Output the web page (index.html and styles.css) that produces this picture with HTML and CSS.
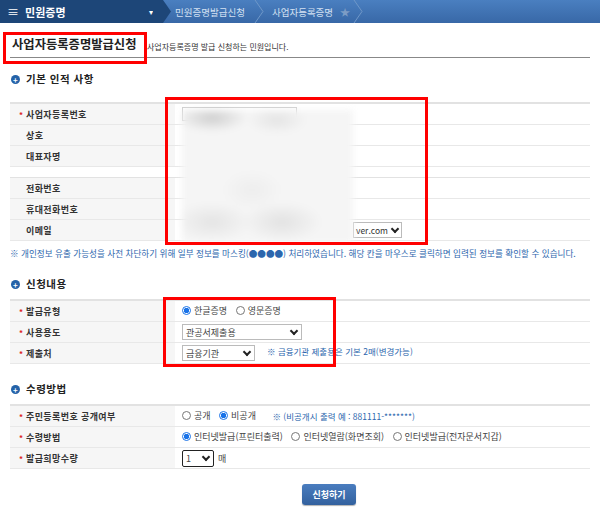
FILE: index.html
```html
<!DOCTYPE html>
<html lang="ko">
<head>
    <meta charset="UTF-8">
    <title>사업자등록증명발급신청</title>
    <link rel="stylesheet" href="styles.css">
</head>
<body>

    <div class="topbar">
        <div class="menu">
            <span class="burger">&#8801;</span>
            <span class="menu-title">민원증명</span>
            <span class="caret">&#9662;</span>
        </div>
        <svg class="tip" width="22" height="23" viewBox="0 0 22 23"><polygon points="0,0 10,0 18,11.5 10,23 0,23" fill="#1d4678"/></svg>
        <div class="crumb crumb-1">민원증명발급신청</div>
        <svg class="sep" width="10" height="23" viewBox="0 0 10 23"><polyline points="1,0 9,11.5 1,23" fill="none" stroke="#6f97c8" stroke-width="1"/></svg>
        <div class="crumb crumb-2">사업자등록증명<span class="star">&#9733;</span></div>
        <svg class="sep" width="10" height="23" viewBox="0 0 10 23"><polyline points="1,0 9,11.5 1,23" fill="none" stroke="#6f97c8" stroke-width="1"/></svg>
    </div>

    <div class="page">
        <div class="title-row">
            <h1>사업자등록증명발급신청</h1>
            <span class="desc">사업자등록증명 발급 신청하는 민원입니다.</span>
        </div>

        <h2 class="sec first"><span class="dot">+</span>기본 인적 사항</h2>
        <div class="box-wrap">
            <table class="form">
                <tr><th><span class="req">*</span>사업자등록번호</th><td><input class="txt" type="text"></td></tr>
                <tr><th>상호</th><td></td></tr>
                <tr><th>대표자명</th><td></td></tr>
                <tr class="gap"><th></th><td></td></tr>
                <tr><th>전화번호</th><td></td></tr>
                <tr><th>휴대전화번호</th><td></td></tr>
                <tr><th>이메일</th><td><span class="mail">ver.com<span class="chev"></span></span></td></tr>
            </table>
            <div class="blur"></div>
            <div class="mark mark-1"></div>
        </div>
        <p class="note">※ 개인정보 유출 가능성을 사전 차단하기 위해 일부 정보를 마스킹(●●●●) 처리하였습니다. 해당 칸을 마우스로 클릭하면 입력된 정보를 확인할 수 있습니다.</p>

        <h2 class="sec"><span class="dot">+</span>신청내용</h2>
        <div class="box-wrap">
            <table class="form">
                <tr><th><span class="req">*</span>발급유형</th><td>
                    <label class="opt"><span class="radio on"></span>한글증명</label>
                    <label class="opt"><span class="radio"></span>영문증명</label>
                </td></tr>
                <tr><th><span class="req">*</span>사용용도</th><td><span class="sel sel-use">관공서제출용<span class="chev"></span></span></td></tr>
                <tr><th><span class="req">*</span>제출처</th><td><span class="sel sel-to">금융기관<span class="chev"></span></span><span class="hint">※ 금융기관 제출용은 기본 2매(변경가능)</span></td></tr>
            </table>
            <div class="mark mark-2"></div>
        </div>

        <h2 class="sec"><span class="dot">+</span>수령방법</h2>
        <table class="form">
            <tr><th><span class="req">*</span>주민등록번호 공개여부</th><td>
                <label class="opt"><span class="radio"></span>공개</label>
                <label class="opt"><span class="radio on"></span>비공개</label>
                <span class="hint near">※ (비공개시 출력 예 : 881111-*******)</span>
            </td></tr>
            <tr><th><span class="req">*</span>수령방법</th><td>
                <label class="opt"><span class="radio on"></span>인터넷발급(프린터출력)</label>
                <label class="opt"><span class="radio"></span>인터넷열람(화면조회)</label>
                <label class="opt"><span class="radio"></span>인터넷발급(전자문서지갑)</label>
            </td></tr>
            <tr><th><span class="req">*</span>발급희망수량</th><td><span class="sel sel-num">1<span class="chev"></span></span><span class="unit">매</span></td></tr>
        </table>

        <div class="actions">
            <button class="submit">신청하기</button>
        </div>
    </div>

    <div class="mark mark-title"></div>

</body>
</html>
```

FILE: styles.css
```css
body {
    margin: 0;
    font-family: "Noto Sans CJK KR", "Noto Sans", sans-serif;
    font-size: 9px;
    color: #333;
    background: #fff;
    position: relative;
    width: 600px;
    height: 521px;
    overflow: hidden;
}
.topbar {
    display: flex;
    align-items: center;
    height: 23px;
    background: linear-gradient(to bottom, #4a7fc0, #3868a7);
    color: #d4e1f2;
}
.menu {
    display: flex;
    align-items: center;
    width: 153px;
    height: 23px;
    background: #1d4678;
    color: #fff;
    box-sizing: border-box;
    padding-left: 7px;
}
.burger {
    font-size: 12px;
    margin-right: 6px;
}
.menu-title {
    font-size: 11px;
    font-weight: bold;
    flex-grow: 1;
}
.caret {
    font-size: 8px;
}
.tip {
    display: block;
}
.crumb {
    font-size: 9.5px;
}
.crumb-1 {
    padding-right: 9px;
}
.crumb-2 {
    padding: 0 3px 0 8px;
}
.star {
    color: #7c9cc5;
    font-size: 10px;
    margin-left: 7px;
}
.sep {
    display: block;
}
.page {
    padding: 0 10px;
}
.title-row {
    display: flex;
    align-items: flex-end;
    height: 35px;
    border-bottom: 1px solid #888;
    box-sizing: border-box;
    padding-bottom: 5px;
}
h1 {
    margin: 0 0 0 2px;
    font-size: 12.3px;
    font-weight: bold;
    color: #222;
    line-height: 16px;
    width: 135px;
}
.desc {
    font-size: 8px;
    color: #333;
    line-height: 11px;
}
.sec {
    display: flex;
    align-items: center;
    margin: 18px 0 8px 1px;
    font-size: 10.5px;
    font-weight: bold;
    color: #222;
    line-height: 14px;
    letter-spacing: 0.5px;
}
.sec.first {
    margin-top: 14px;
    margin-bottom: 16px;
}
.dot {
    display: inline-block;
    width: 9px;
    height: 9px;
    line-height: 9px;
    border-radius: 50%;
    background: #2462a8;
    color: #fff;
    font-size: 8px;
    text-align: center;
    margin-right: 6px;
}
.box-wrap {
    position: relative;
}
.form {
    width: 100%;
    border-collapse: collapse;
    border-top: 2px solid #e2e2e2;
}
.form th, .form td {
    height: 20px;
    border-bottom: 1px solid #e8e8e8;
    padding: 0;
    font-size: 9px;
}
.form th {
    width: 165px;
    background: #f6f6f6;
    text-align: left;
    font-weight: bold;
    color: #333;
    padding-left: 16px;
    box-sizing: border-box;
    letter-spacing: 0.4px;
}
.form td {
    padding-left: 7px;
    color: #444;
}
.req {
    color: #d22;
    display: inline-block;
    width: 7px;
    margin-left: -7px;
    font-size: 8px;
}
.form tr.gap th, .form tr.gap td {
    height: 10px;
    background: #fff;
    border-bottom: 1px solid #e2e2e2;
}
.txt {
    width: 115px;
    height: 14px;
    border: 1px solid #ccc;
    box-sizing: border-box;
    display: block;
}
.mail {
    display: inline-flex;
    align-items: center;
    justify-content: space-between;
    margin-left: 171px;
    width: 49px;
    height: 16px;
    border: 1px solid #bbb;
    box-sizing: border-box;
    padding: 0 3px 0 2px;
    font-size: 8.5px;
    color: #333;
}
.blur {
    position: absolute;
    left: 172px;
    top: 8px;
    width: 171px;
    height: 133px;
    background:
        radial-gradient(ellipse 36px 14px at 30px 8px, #cfcfcf, transparent),
        radial-gradient(ellipse 30px 14px at 95px 10px, #e4e4e4, transparent),
        radial-gradient(ellipse 40px 20px at 100px 112px, #e2e2e2, transparent),
        radial-gradient(ellipse 40px 20px at 30px 112px, #e4e4e4, transparent),
        radial-gradient(ellipse 30px 20px at 70px 80px, #ededed, transparent),
        #f5f5f5;
    filter: blur(3px);
}
.mark {
    position: absolute;
    border: 3px solid #f00;
    box-sizing: border-box;
}
.mark-1 {
    left: 155px;
    top: -5px;
    width: 263px;
    height: 148px;
}
.mark-2 {
    left: 153px;
    top: -2px;
    width: 173px;
    height: 70px;
}
.mark-title {
    left: 3px;
    top: 32px;
    width: 144px;
    height: 32px;
}
.note {
    margin: 6px 0 0;
    font-size: 8.6px;
    line-height: 12px;
    color: #2c66ad;
    white-space: nowrap;
}
.opt {
    display: inline-flex;
    align-items: center;
    margin-right: 6px;
}
.radio {
    display: inline-block;
    width: 9px;
    height: 9px;
    border: 1px solid #777;
    border-radius: 50%;
    box-sizing: border-box;
    margin-right: 3px;
    background: #fff;
}
.radio.on {
    border-color: #1a73e8;
    background: radial-gradient(circle, #1a73e8 2.5px, #fff 3px);
}
.sel {
    display: inline-flex;
    align-items: center;
    justify-content: space-between;
    height: 16px;
    border: 1px solid #bbb;
    box-sizing: border-box;
    padding: 0 4px 0 3px;
    vertical-align: middle;
}
.sel-use {
    width: 120px;
}
.sel-to {
    width: 73px;
}
.sel-num {
    width: 32px;
    height: 17px;
    border: 1px solid #222;
    border-radius: 2px;
}
.chev {
    display: inline-block;
    width: 4px;
    height: 4px;
    border-right: 2px solid #222;
    border-bottom: 2px solid #222;
    transform: rotate(45deg);
    margin-top: -3px;
}
.hint {
    color: #2c66ad;
    margin-left: 12px;
    font-size: 8.5px;
}
.hint.near {
    margin-left: 8px;
}
.unit {
    margin-left: 4px;
    vertical-align: middle;
}
.actions {
    display: flex;
    justify-content: center;
    padding: 15px 0 0 58px;
}
.submit {
    width: 54px;
    height: 21px;
    border: none;
    border-radius: 3px;
    background: linear-gradient(to bottom, #4a7dbf, #33619e);
    color: #fff;
    font-family: "Noto Sans CJK KR", sans-serif;
    font-size: 9px;
    font-weight: bold;
    box-shadow: 0 1px 1px rgba(0, 0, 0, 0.3);
}
```
